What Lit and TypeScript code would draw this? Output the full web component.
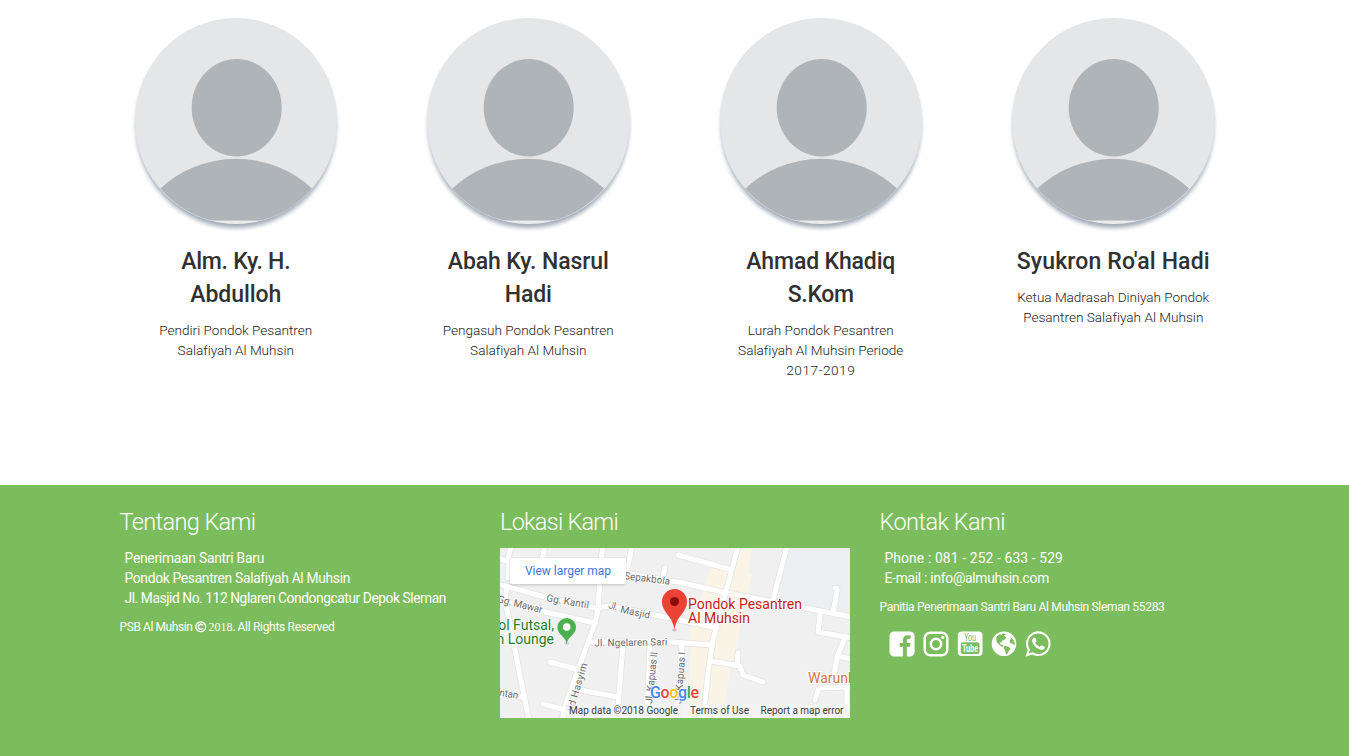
import { LitElement, html, css, svg } from "lit";
import { customElement, property } from "lit/decorators.js";

/* One line of text, tracked so that it takes exactly `width` pixels. */
@customElement("fit-line")
class FitLine extends LitElement {
  @property() text = "";
  @property({ type: Number }) width = 0;

  static styles = css`
    :host { display: block; white-space: pre; }
    .line { display: inline-block; }
  `;

  updated() {
    const el = this.renderRoot.querySelector(".line") as HTMLElement;
    el.style.letterSpacing = "0px";
    const natural = el.getBoundingClientRect().width;
    const gap = (this.width - natural) / this.text.length;
    el.style.letterSpacing = gap.toFixed(3) + "px";
  }

  render() {
    return html`<span class="line">${this.text}</span>`;
  }
}

type Line = [string, number];

@customElement("team-member")
class TeamMember extends LitElement {
  @property({ attribute: false }) name: Line[] = [];
  @property({ attribute: false }) role: any = [];

  static styles = css`
    :host { display: block; text-align: center; }
    .photo {
      display: block; width: 202.5px; height: 206px; margin: 0 auto 20.5px;
      border-radius: 50%; background: #e4e6e8;
      box-shadow: 0 5px 4px -1px #a3adb9;
    }
    .name { font: 500 23px/33px Roboto, sans-serif; color: #313131; }
    .role { margin-top: 9px; font: 300 13.6px/20px Roboto, sans-serif; color: #222; }
  `;

  render() {
    return html`
      <svg class="photo" viewBox="0 0 202.5 206">
        <defs><clipPath id="c"><ellipse cx="101.25" cy="103" rx="101" ry="102.7" /></clipPath></defs>
        <ellipse cx="101.7" cy="89.7" rx="45" ry="48.7" fill="#aeb4b8" />
        <g clip-path="url(#c)">
          <path d="M-9 249a110 108 0 0 1 220.4 0V202.7H-9z" fill="#aeb4b8" />
          <rect y="202.7" width="203" height="4" fill="#e9ebec" />
        </g>
      </svg>
      <div class="name">${this.name.map(([t, w]) => html`<fit-line .text=${t} .width=${w}></fit-line>`)}</div>
      <div class="role">${this.role.map(([t, w]: Line) => html`<fit-line .text=${t} .width=${w}></fit-line>`)}</div>
    `;
  }
}

const ROADS = [
  "M103-2L101 12L98 62L95 75L67 152L62 172",
  "M-2 36L45 49L95 60L110 58L175 71L217 80",
  "M-2 51L45 64L95 75",
  "M100 20L125 25L170 33L178 34L227 45L352 69",
  "M165 20L162 32",
  "M132-2L127 24",
  "M92 94H172L212 97",
  "M238-2L230 29L220 65L213 92L208 125L203 172",
  "M178 7L232 22",
  "M287-2L273 52",
  "M335 40Q338 40 337 44L333 64",
  "M320 67L318 84L352 90",
  "M345 90L337 109L334 128M337 108L352 111",
  "M315 152L319 140L352 139M347 140V158",
  "M211 113L240 118L243 127L263 134M238 105L237 117",
  "M7 40L5 52L29 172",
  "M50 114L80 122",
  "M80 142L118 149",
  "M123 97L117 172",
  "M43 156L69 163",
  "M-2 143L25 150",
  "M11-2L8 12M-2 10L9 14L8 30",
  "M45-2L42 12",
  "M150 97L147 172",
  "M182 96L177 172",
  "M-2 82L8 85",
];

const LABELS: [string, number, number, number, number][] = [
  ["Sepakbola", 124, 31, 7, 46],
  ["Gg. Kantil", 46, 53, 10, 43],
  ["Gg. Mawar", -3, 54, 14, 46],
  ["Jl.", 108, 60, 14, 9],
  ["Masjid", 120, 64.5, 12, 30],
  ["Jl. Ngelaren Sari", 94.5, 98.5, -1, 73],
  ["Jl. Kapuas II", 152, 156, -84, 52],
  ["Jl. Kapuas I", 181, 156, -85, 52],
  ["jid Hasyim", 73, 164, -73, 50],
  ["ntan", -1, 147.5, 10, 19],
];

@customElement("location-map")
class LocationMap extends LitElement {
  static styles = css`
    :host { display: block; position: relative; width: 350px; height: 170px; overflow: hidden; font-family: Roboto, sans-serif; }
    .map { display: block; background: #f0f0f0; }
    .edge { fill: none; stroke: #e2e2e2; stroke-width: 6.4; stroke-linecap: round; stroke-linejoin: round; }
    .road { fill: none; stroke: #fff; stroke-width: 5; stroke-linecap: round; stroke-linejoin: round; }
    .street { font-size: 10px; fill: #6b6b6b; stroke: #fafafa; stroke-width: 2px; paint-order: stroke; }
    .place { font-size: 14px; stroke: #fff; stroke-width: 2px; paint-order: stroke; }
    .legal { font-size: 10px; fill: #3c3c3c; }
    .logo { font-size: 16px; font-weight: 500; stroke: #fff; stroke-width: 1.5px; paint-order: stroke; }
    .larger {
      position: absolute; left: 10px; top: 10px; width: 116px; height: 26px; box-sizing: border-box; padding-left: 15px;
      background: #fff; border-radius: 2px; box-shadow: 0 1px 3px rgba(0, 0, 0, 0.2);
      font-size: 12px; line-height: 26px; color: #3a77dc;
    }
  `;

  render() {
    return html`
      <svg class="map" width="350" height="170" viewBox="0 0 350 170">
        <path d="M287 0H350V67L273 51z" fill="#ebeff2" />
        <path d="M241 0H252L248 25L252 27L245 58L232 115L222 170H188L191 78L198 60L210 20L230 24z" fill="#faf4e6" />
        ${ROADS.map((d) => svg`<path class="edge" d=${d} />`)}
        ${ROADS.map((d) => svg`<path class="road" d=${d} />`)}
        ${LABELS.map(([t, x, y, r, w]) => svg`<text class="street" transform="translate(${x} ${y}) rotate(${r})" textLength=${w}>${t}</text>`)}
        <g class="place">
          <g fill="#1b7d1f" text-anchor="end"><text x="54" y="81.7">ol Futsal,</text><text x="54" y="95.7">n Lounge</text></g>
          <g fill="#c31b11"><text x="188" y="61" textLength="114">Pondok Pesantren</text><text x="188" y="75" textLength="62">Al Muhsin</text></g>
          <text x="308" y="135" fill="#d2743f">Warunk</text>
        </g>
        <ellipse cx="66.7" cy="95.5" rx="2.5" ry="1.2" fill="#ccc" />
        <path d="M66.7 96C65.5 88 57.4 87 57.4 79.3a9.3 9.3 0 0 1 18.6 0C76 87 67.9 88 66.7 96z" fill="#4caf50" />
        <circle cx="66.7" cy="79" r="3.8" fill="#fff" />
        <ellipse cx="174.5" cy="82" rx="2.6" ry="1.6" fill="#ccc" />
        <path d="M174.5 83C173.500 68 162 65 162 53.500a12.500 12.500 0 0 1 25 0C187 65 175.500 68 174.500 83z" fill="#ea4335" />
        <circle cx="174.500" cy="53.500" r="4.500" fill="#8c0b0b" />
        <text class="logo" x="150" y="149.500" textLength="49"><tspan fill="#4285f4">G</tspan><tspan fill="#ea4335">o</tspan><tspan fill="#fbbc05">o</tspan><tspan fill="#4285f4">g</tspan><tspan fill="#34a853">l</tspan><tspan fill="#ea4335">e</tspan></text>
        <rect x="65" y="156" width="285" height="14" fill="#f5f5f5" opacity=".7" />
        <g class="legal">
          <text x="69" y="166" textLength="109">Map data ©2018 Google</text>
          <text x="190" y="166" textLength="59">Terms of Use</text>
          <text x="260.500" y="166" textLength="83">Report a map error</text>
        </g>
      </svg>
      <div class="larger"><fit-line .text=${"View larger map"} .width=${86}></fit-line></div>
    `;
  }
}

const FACEBOOK = "M1376 128q119 0 203.5 84.5t84.5 203.5v960q0 119-84.5 203.5t-203.5 84.5h-188v-595h199l30-232h-229v-148q0-56 23.5-84t91.5-28l122-1v-207q-63-9-178-9-136 0-217.500 80t-81.500 226v171h-200v232h200v595h-532q-119 0-203.500-84.500t-84.500-203.500v-960q0-119 84.500-203.500t203.500-84.500h960z";
const WHATSAPP = "M1113 974q13 0 97.500 44t89.500 53q2 5 2 15 0 33-17 76-16 39-71 65.500t-102 26.500q-57 0-190-62-98-45-170-118t-148-185q-72-107-71-194v-8q3-91 74-158 24-22 52-22 6 0 18 1.500t19 1.500q19 0 26.500 6.500t15.500 27.500q8 20 33 88t25 75q0 21-34.500 57.500t-34.500 46.500q0 7 5 15 34 73 102 137 56 53 151 101 12 7 22 7 15 0 54-48.500t52-48.500zm-203 530q127 0 243.500-50t200.500-134 134-200.500 50-243.500-50-243.500-134-200.500-200.500-134-243.500-50-243.500 50-200.500 134-134 200.500-50 243.500q0 203 120 368l-79 233 242-77q158 104 345 104zm0-1382q153 0 292.500 60t240.500 161 161 240.500 60 292.500-60 292.500-161 240.500-240.500 161-292.500 60q-195 0-365-94l-417 134 136-405q-108-178-108-389 0-153 60-292.500t161-240.500 240.500-161 292.500-60z";

@customElement("app-root")
class AppRoot extends LitElement {
  static styles = css`
    :host { display: flex; flex-direction: column; height: 756px; overflow: hidden; background: #fff; }
    .team { box-sizing: border-box; height: 485px; width: 1170px; margin-left: 89.5px; padding-top: 18px; display: grid; grid-template-columns: repeat(4, 292.5px); align-items: start; }
    .footer { flex: 1; background: #7bbd5c; color: #fff; padding: 24px 0 0 119.5px; display: grid; grid-template-columns: repeat(3, 380px); align-items: start; font: 400 14px/20px Roboto, sans-serif; }
    .title { font: 300 23.5px/26px Roboto, sans-serif; margin-bottom: 13px; }
    .info { padding-left: 5px; font-size: 13.8px; }
    .small { font-size: 12px; line-height: 20px; margin-top: 9px; display: flex; }
    .year { font: 12px/20px "Liberation Serif", serif; margin: 0 2px 0 2px; }
    .copy { width: 11.5px; height: 11.5px; margin: 4px 0 0 2.500px; }
    .social { display: flex; gap: 8px; padding-left: 9px; margin-top: 13.5px; }
    .icon { width: 26px; height: 26px; fill: #fff; }
    .map-column { padding-left: 0.5px; }
    .tube { font-family: "Liberation Sans Narrow", "Liberation Sans", sans-serif; font-weight: 700; }
  `;

  line(text: string, width: number) {
    return html`<fit-line .text=${text} .width=${width}></fit-line>`;
  }

  render() {
    const people: { name: Line[]; role: Line[] }[] = [
      { name: [["Alm. Ky. H.", 109], ["Abdulloh", 91]], role: [["Pendiri Pondok Pesantren", 153], ["Salafiyah Al Muhsin", 116]] },
      { name: [["Abah Ky. Nasrul", 161], ["Hadi", 47]], role: [["Pengasuh Pondok Pesantren", 171], ["Salafiyah Al Muhsin", 116]] },
      { name: [["Ahmad Khadiq", 149], ["S.Kom", 66]], role: [["Lurah Pondok Pesantren", 146], ["Salafiyah Al Muhsin Periode", 165], ["2017-2019", 69]] },
      { name: [["Syukron Ro'al Hadi", 193]], role: [["Ketua Madrasah Diniyah Pondok", 192], ["Pesantren Salafiyah Al Muhsin", 180]] },
    ];
    return html`
      <section class="team">
        ${people.map((p) => html`<team-member .name=${p.name} .role=${p.role}></team-member>`)}
      </section>
      <footer class="footer">
        <div>
          <div class="title">${this.line("Tentang Kami", 136)}</div>
          <div class="info">
            ${this.line("Penerimaan Santri Baru", 139.5)}
            ${this.line("Pondok Pesantren Salafiyah Al Muhsin", 225)}
            ${this.line("Jl. Masjid No. 112 Nglaren Condongcatur Depok Sleman", 321.5)}
          </div>
          <div class="small">
            ${this.line("PSB Al Muhsin", 73)}
            <svg class="copy" viewBox="0 0 21 21" fill="none" stroke="#fff" stroke-width="2.4"><circle cx="10.5" cy="10.5" r="9" /><path d="M14.5 8A4.6 4.6 0 1 0 14.5 13" stroke-width="2.8" /></svg>
            <span class="year">2018.</span>
            ${this.line("All Rights Reserved", 97)}
          </div>
        </div>
        <div class="map-column">
          <div class="title">${this.line("Lokasi Kami", 118)}</div>
          <location-map></location-map>
        </div>
        <div>
          <div class="title">${this.line("Kontak Kami", 125.5)}</div>
          <div class="info">
            ${this.line("Phone : 081 - 252 - 633 - 529", 178.5)}
            ${this.line("E-mail : info@almuhsin.com", 164.5)}
          </div>
          <div class="small">${this.line("Panitia Penerimaan Santri Baru Al Muhsin Sleman 55283", 285)}</div>
          <div class="social">
            <svg class="icon" viewBox="98 100 1590 1590"><path d=${FACEBOOK} /></svg>
            <svg class="icon" viewBox="-.5 0 26 26"><g fill="none" stroke="#fff"><rect x="1.2" y="1.7" width="22.6" height="22.6" rx="5.5" stroke-width="2.4" /><circle cx="12.5" cy="13" r="5.2" stroke-width="2.5" /></g><circle cx="19.2" cy="6.4" r="1.6" /></svg>
            <svg class="icon" viewBox="-.5 0 26 26"><rect x=".3" y=".5" width="24.7" height="24.5" rx="4" /><g class="tube"><text x="6.5" y="10" font-size="10.5" textLength="12" lengthAdjust="spacingAndGlyphs" fill="#62b878" font-weight="400">You</text><rect x="3.3" y="11.3" width="18.7" height="11.7" rx="2" fill="#7bbd5c" /><text x="4.7" y="21" font-size="10.5" textLength="16" lengthAdjust="spacingAndGlyphs">Tube</text></g></svg>
            <svg class="icon" viewBox="-.5 0 26 26"><circle cx="12.5" cy="12.8" r="12.3" /><path d="M6.5 4.2L8.500 3L9.500 4L11 2.500L14.500 3L12.500 4.800L14.800 6.200L13.200 8.500L10.800 9.500L9.500 11.800L8.300 11.500L9 13.500L11.500 14L12 16L9.500 15.300L7 13L5 10.500L4.800 6.500zM13 14.700L17.500 16L19 18L17 20.500L15.500 23.500L14 22.500L13.500 19L12 17zM19 6L21.500 8.500L23.500 12.500L22.500 14L20.800 12.500L18.500 12L18 9.800L19.300 8.200z" fill="#7bbd5c" /></svg>
            <svg class="icon" viewBox="98 100 1590 1590"><path d=${WHATSAPP} /></svg>
          </div>
        </div>
      </footer>
    `;
  }
}
